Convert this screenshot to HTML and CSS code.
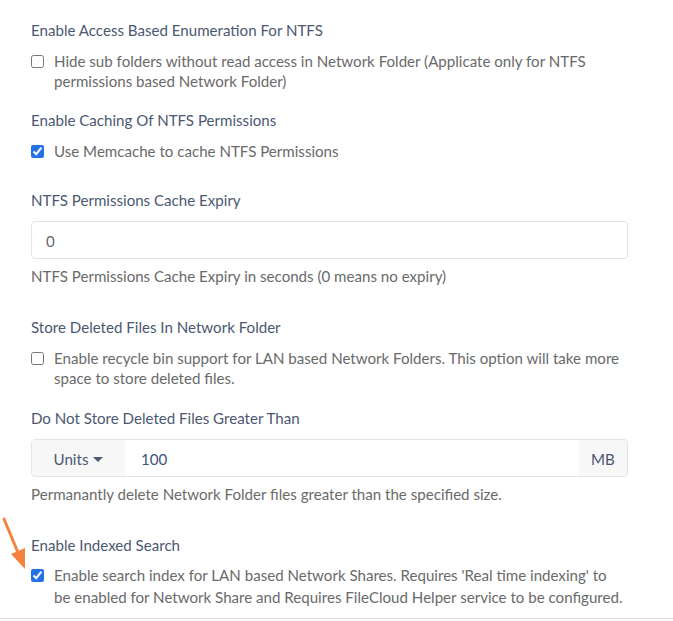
FILE: index.html
```html
<!DOCTYPE html>
<html lang="en">
<head>
    <meta charset="UTF-8">
    <meta name="viewport" content="width=device-width, initial-scale=1.0">
    <title>Network Folder Settings</title>
    <link rel="stylesheet" href="styles.css">
</head>
<body>
    <div class="settings">
        <div class="form-group">
            <label class="field-label">Enable Access Based Enumeration For NTFS</label>
            <label class="check">
                <input type="checkbox">
                <span>Hide sub folders without read access in Network Folder (Applicate only for NTFS permissions based Network Folder)</span>
            </label>
        </div>

        <div class="form-group spaced">
            <label class="field-label">Enable Caching Of NTFS Permissions</label>
            <label class="check">
                <input type="checkbox" checked>
                <span>Use Memcache to cache NTFS Permissions</span>
            </label>
        </div>

        <div class="form-group spaced-lg">
            <label class="field-label">NTFS Permissions Cache Expiry</label>
            <input class="text-input" type="text" value="0">
            <p class="help">NTFS Permissions Cache Expiry in seconds (0 means no expiry)</p>
        </div>

        <div class="form-group spaced-sm">
            <label class="field-label">Store Deleted Files In Network Folder</label>
            <label class="check">
                <input type="checkbox">
                <span>Enable recycle bin support for LAN based Network Folders. This option will take more space to store deleted files.</span>
            </label>
        </div>

        <div class="form-group spaced-lg">
            <label class="field-label">Do Not Store Deleted Files Greater Than</label>
            <div class="input-group">
                <div class="addon units">Units <span class="caret"></span></div>
                <input class="group-input" type="text" value="100">
                <div class="addon mb">MB</div>
            </div>
            <p class="help">Permanantly delete Network Folder files greater than the specified size.</p>
        </div>

        <div class="form-group last">
            <svg class="arrow" width="32" height="60" viewBox="0 0 32 60">
                <line x1="4" y1="7" x2="19" y2="43" stroke="#f5813f" stroke-width="3" stroke-linecap="round"/>
                <polygon points="25,57 11,42 25,36" fill="#f5813f"/>
            </svg>
            <label class="field-label">Enable Indexed Search</label>
            <label class="check wide">
                <input type="checkbox" checked>
                <span>Enable search index for LAN based Network Shares. Requires 'Real time indexing' to<br>be enabled for Network Share and Requires FileCloud Helper service to be configured.</span>
            </label>
        </div>
    </div>
</body>
</html>
```

FILE: styles.css
```css
body {
    margin: 0;
    background: #ffffff;
    font-family: 'Lato', sans-serif;
    font-size: 15.1px;
    color: #6a6a6a;
}

.settings {
    padding: 20px 45px 0 31px;
    border-bottom: 1px solid #dcdcdc;
    width: 597px;
}

.form-group {
    position: relative;
    margin-bottom: 19px;
}

.form-group.spaced {
    margin-bottom: 29px;
}

.form-group.spaced-sm {
    margin-bottom: 20px;
}

.form-group.last {
    margin-bottom: 0;
    padding-bottom: 10px;
}

.field-label {
    display: block;
    line-height: 20px;
    margin-bottom: 11px;
    color: #4c5872;
}

.last .field-label {
    margin-bottom: 9px;
}

.check {
    display: flex;
    align-items: flex-start;
    line-height: 20px;
}

.check.wide {
    line-height: 22px;
    white-space: nowrap;
}

.check input {
    width: 13px;
    height: 13px;
    margin: 4px 10px 0 0;
    flex-shrink: 0;
    accent-color: #2372ea;
}

.check.wide input {
    margin-top: 5px;
}

.text-input {
    display: block;
    box-sizing: border-box;
    width: 100%;
    height: 38px;
    padding: 2px 14px 0;
    border: 1px solid #e4e4e4;
    border-radius: 4px;
    font: inherit;
    color: #666;
    outline: none;
}

.help {
    margin: 7px 0 0;
    line-height: 20px;
}

.spaced-lg {
    margin-bottom: 31px;
}

.input-group {
    display: flex;
    height: 38px;
    border: 1px solid #e4e4e4;
    border-radius: 4px;
    box-sizing: border-box;
    overflow: hidden;
}

.addon {
    display: flex;
    align-items: center;
    justify-content: center;
    padding-top: 2px;
    background: #f7f7f7;
    color: #4c5872;
}

.units {
    width: 93px;
}

.mb {
    width: 48px;
}

.caret {
    display: inline-block;
    margin-left: 5px;
    border-left: 5px solid transparent;
    border-right: 5px solid transparent;
    border-top: 5px solid #4c5872;
}

.group-input {
    flex: 1;
    border: none;
    padding: 2px 16px 0;
    font: inherit;
    color: #3d5478;
    outline: none;
}

.arrow {
    position: absolute;
    left: -31px;
    top: -23px;
}
```
